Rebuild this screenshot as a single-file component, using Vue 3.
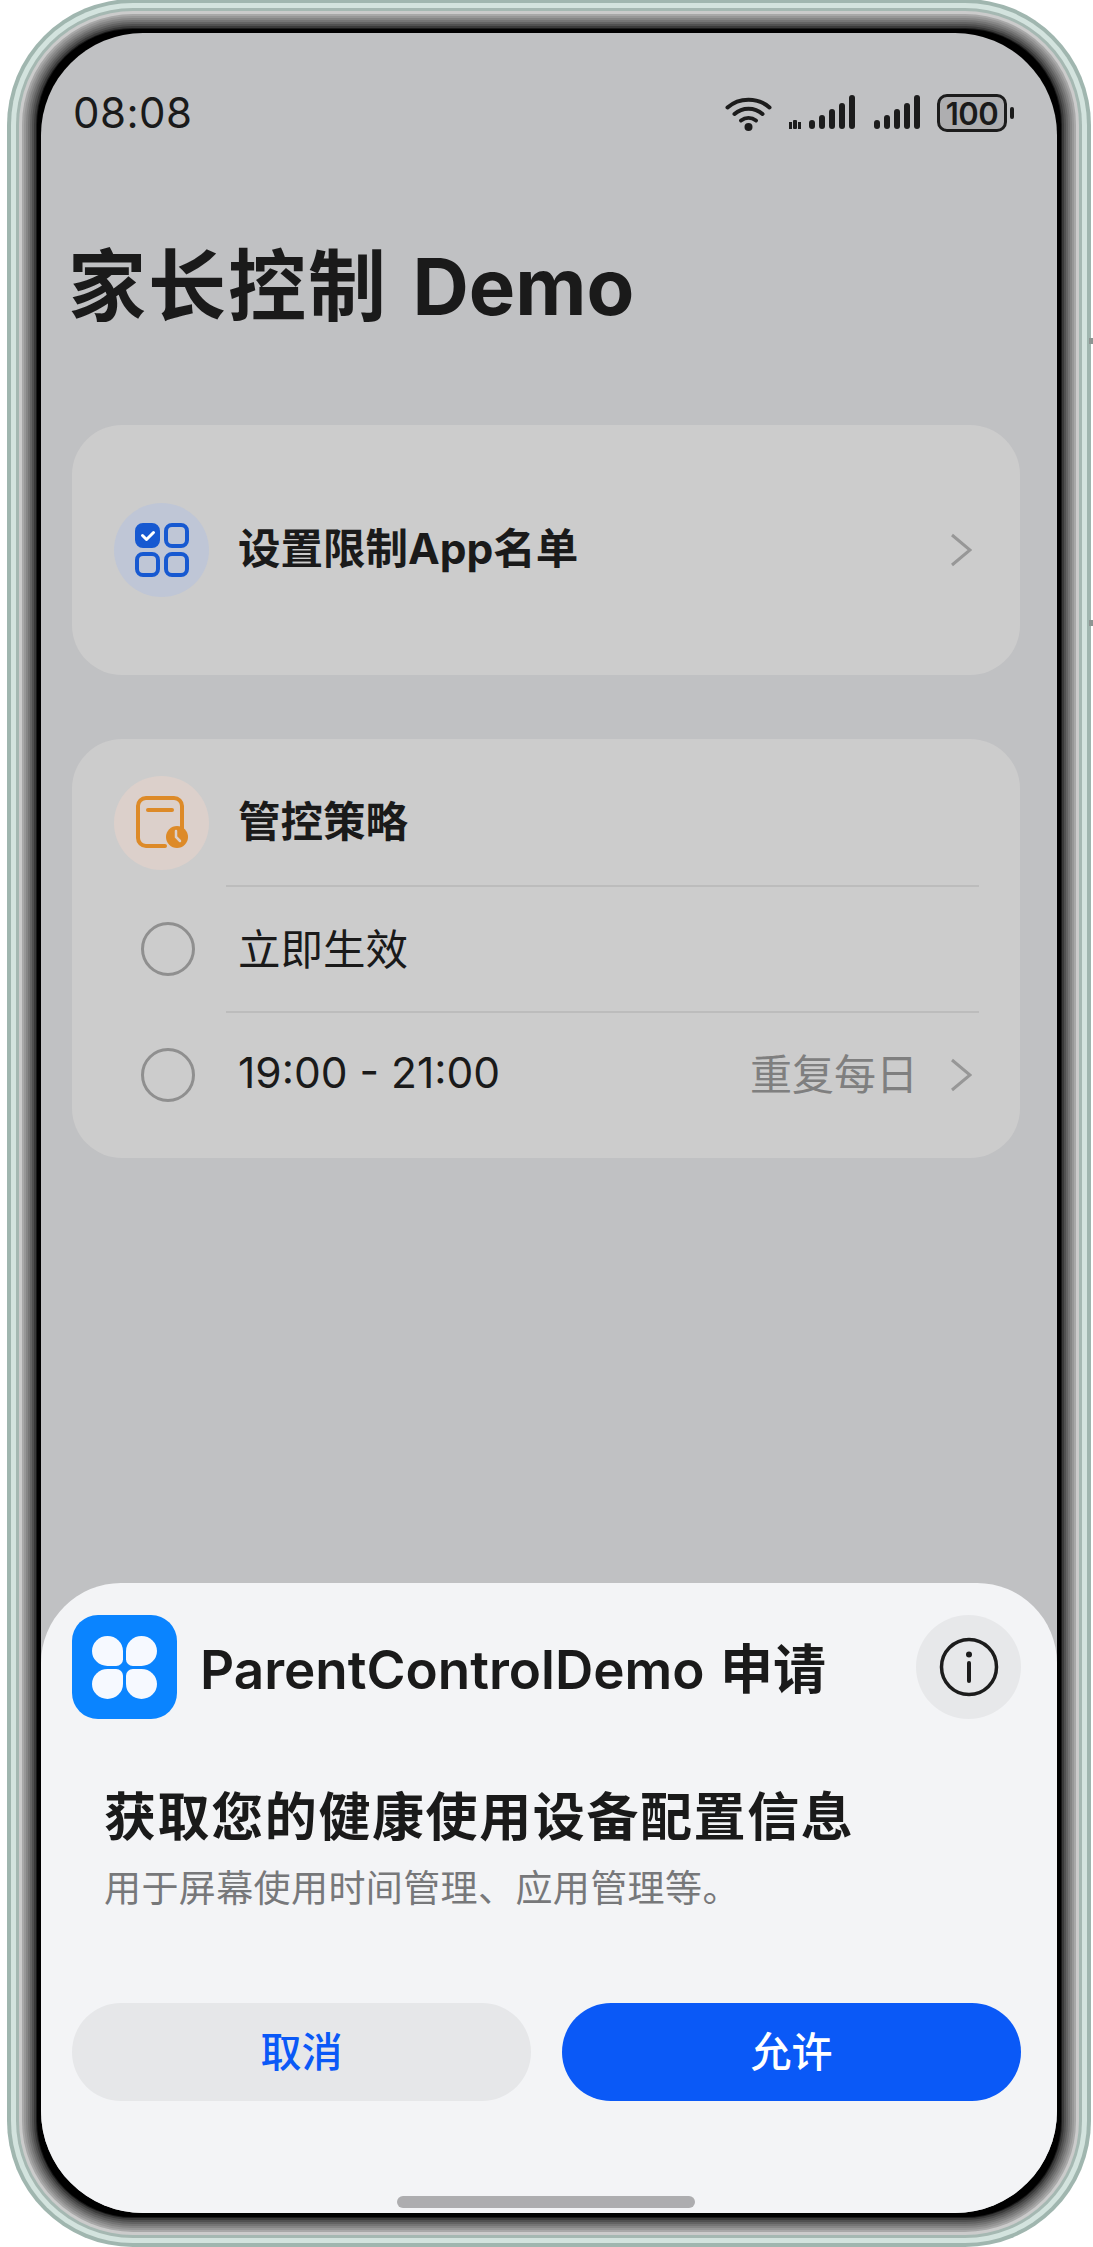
<script setup>
const options = [
  { id: "now", label: "立即生效" },
  { id: "range", label: "19:00 - 21:00", extra: "重复每日" },
];
</script>

<template>
  <div class="page">
    <i class="side-key"></i>
    <div class="bezel">
      <div class="screen">
        <div class="status">
          <span class="time">08:08</span>
          <div class="status-icons">
            <svg class="wifi" width="47" height="35" viewBox="0 0 47 35" fill="none" stroke="#1c1c1c" stroke-width="4" stroke-linecap="round">
              <path d="M2.5 11.5C14 1 33 1 44.5 11.5" />
              <path d="M9.5 18C17.5 11 29.5 11 37.5 18" />
              <path d="M16 24.5C20.5 21 26.5 21 31 24.5" />
              <circle cx="23.5" cy="31" r="4" fill="#1c1c1c" stroke="none" />
            </svg>
            <svg width="66" height="36" viewBox="0 0 66 36" fill="#1c1c1c">
              <rect x="0" y="27" width="3" height="7" />
              <rect x="4" y="25" width="4" height="9" rx="1" />
              <rect x="9" y="27" width="3" height="7" />
              <rect x="20" y="25" width="6" height="9" rx="3" />
              <rect x="30" y="20" width="6" height="14" rx="3" />
              <rect x="40" y="14" width="6" height="20" rx="3" />
              <rect x="50" y="8" width="6" height="26" rx="3" />
              <rect x="60" y="0" width="6" height="34" rx="3" />
            </svg>
            <svg width="46" height="36" viewBox="0 0 46 36" fill="#1c1c1c">
              <rect x="0" y="25" width="6" height="9" rx="3" />
              <rect x="10" y="20" width="6" height="14" rx="3" />
              <rect x="20" y="14" width="6" height="20" rx="3" />
              <rect x="30" y="8" width="6" height="26" rx="3" />
              <rect x="40" y="0" width="6" height="34" rx="3" />
            </svg>
            <div class="battery"><span>100</span></div>
            <i class="battery-nub"></i>
          </div>
        </div>

        <h1 class="title"><span class="title-cn">家长控制</span> Demo</h1>

        <section class="card card-single">
          <div class="round round-blue">
            <svg width="54" height="54" viewBox="0 0 54 54" fill="none" stroke="#1759d1" stroke-width="4">
              <rect x="2" y="2" width="21" height="21" rx="6" fill="#1759d1" />
              <rect x="31" y="2" width="21" height="21" rx="6" />
              <rect x="2" y="31" width="21" height="21" rx="6" />
              <rect x="31" y="31" width="21" height="21" rx="6" />
              <path d="M7.5 12.5l4 4 7-7" stroke="#fff" stroke-width="3" stroke-linecap="round" stroke-linejoin="round" />
            </svg>
          </div>
          <span class="card-label">设置限制App名单</span>
          <svg class="chevron" width="22" height="34" viewBox="0 0 22 34" fill="none" stroke="#979797" stroke-width="3">
            <path d="M2 2l18 15L2 32" />
          </svg>
        </section>

        <section class="card card-policy">
          <div class="policy-head">
            <div class="round round-orange">
              <svg width="54" height="54" viewBox="0 0 54 54" fill="none" stroke="#dd8a28" stroke-width="4" stroke-linecap="round">
                <path d="M30 50H11a8 8 0 0 1-8-8V10a8 8 0 0 1 8-8h28a8 8 0 0 1 8 8v24" />
                <path d="M13 14h24" />
                <circle cx="42" cy="41" r="11" fill="#dd8a28" stroke="none" />
                <path d="M41 35v6l4 4" stroke="#dcd0cb" stroke-width="2.5" />
              </svg>
            </div>
            <span class="card-label">管控策略</span>
          </div>
          <template v-for="opt in options" :key="opt.id">
            <div class="divider"></div>
            <div class="option">
              <i class="radio"></i>
              <span class="option-label">{{ opt.label }}</span>
              <template v-if="opt.extra">
                <span class="option-extra">{{ opt.extra }}</span>
                <svg class="chevron" width="22" height="34" viewBox="0 0 22 34" fill="none" stroke="#979797" stroke-width="3">
                  <path d="M2 2l18 15L2 32" />
                </svg>
              </template>
            </div>
          </template>
        </section>

        <div class="sheet">
          <div class="sheet-head">
            <div class="app-icon">
              <div class="petals">
                <i class="p1"></i><i class="p2"></i><i class="p3"></i><i class="p4"></i>
              </div>
            </div>
            <span class="app-title">ParentControlDemo 申请</span>
            <div class="info">
              <svg width="60" height="60" viewBox="0 0 60 60" fill="none" stroke="#1c1c1c" stroke-width="3.5">
                <circle cx="30" cy="30" r="27.5" />
                <circle cx="30" cy="17.5" r="3" fill="#1c1c1c" stroke="none" />
                <path d="M30 26v18" stroke-width="4" stroke-linecap="round" />
              </svg>
            </div>
          </div>
          <h2 class="ask">获取您的健康使用设备配置信息</h2>
          <p class="ask-sub">用于屏幕使用时间管理、应用管理等。</p>
          <div class="actions">
            <button class="btn btn-cancel">取消</button>
            <button class="btn btn-allow">允许</button>
          </div>
          <div class="home-bar"></div>
        </div>
      </div>
    </div>
  </div>
</template>

<style>
html,
body {
  background: #fff;
}
</style>

<style scoped>
.page {
  position: relative;
  box-sizing: border-box;
  width: 1093px;
  height: 2247px;
  padding: 33px 36px 34px 41px;
  font-family: Inter, "Noto Sans CJK SC", sans-serif;
  color: #1a1a1a;
}

/* rings stand in for the phone frame */
.bezel {
  height: 100%;
  background: #000;
  border-radius: 92px;
  box-shadow:
    0 0 0 4px #000,
    0 0 0 5px #1a1a1a,
    0 0 0 7px #3a3a3a,
    0 0 0 9px #505050,
    0 0 0 11px #636363,
    0 0 0 13px #757575,
    0 0 0 15px #868686,
    0 0 0 17px #979797,
    0 0 0 19px #a8a8a8,
    0 0 0 22px #cbcbcb,
    0 0 0 25px #a5b8b2,
    0 0 0 30px #d3e3de,
    0 0 0 34px #a0b6af;
}

/* volume key ends poking out of the right edge */
.side-key {
  position: absolute;
  top: 338px;
  right: 0;
  box-sizing: border-box;
  width: 4px;
  height: 288px;
  border-top: 6px solid #8d9693;
  border-bottom: 6px solid #8d9693;
}

.screen {
  position: relative;
  height: 100%;
  overflow: hidden;
  background: #c0c1c3;
  border-radius: 102px;
}

.status {
  display: flex;
  align-items: center;
  justify-content: space-between;
  height: 160px;
  padding: 0 43px 0 32px;
}

.time {
  font-size: 42px;
  line-height: 40px;
  letter-spacing: 0.5px;
}

.status-icons {
  display: flex;
  align-items: center;
}

.wifi {
  margin-right: 17px;
}

.status-icons svg + svg {
  margin-right: 17px;
}

.status-icons svg:nth-child(2) {
  margin-right: 19px;
}

.battery {
  box-sizing: border-box;
  display: flex;
  align-items: center;
  justify-content: center;
  width: 70px;
  height: 38px;
  border: 3.5px solid #1c1c1c;
  border-radius: 10px;
  background: #aeaeb0;
  font-size: 31px;
  font-weight: 600;
  letter-spacing: -0.5px;
}

.battery-nub {
  width: 4px;
  height: 12px;
  margin-left: 3px;
  border-radius: 2px;
  background: #1c1c1c;
}

.title {
  margin: 54px 0 98px 27px;
  font-size: 78px;
  line-height: 80px;
  font-weight: 700;
  word-spacing: 6px;
}

.title-cn {
  letter-spacing: 2px;
}

.card {
  width: 948px;
  margin-left: 31px;
  background: #cccccc;
  border-radius: 50px;
}

.card-single {
  box-sizing: border-box;
  display: flex;
  align-items: center;
  height: 250px;
  margin-bottom: 64px;
  padding: 0 48px 0 42px;
}

.round {
  display: flex;
  flex: none;
  align-items: center;
  justify-content: center;
  width: 95px;
  height: 94px;
  border-radius: 50%;
}

.round-blue {
  background: #bfc6d6;
}

.round-orange {
  background: #dcd0cb;
}

.card-label {
  flex: 1;
  margin-left: 29px;
  padding-bottom: 9px;
  font-size: 42.5px;
  font-weight: 700;
}

.chevron {
  flex: none;
}

.card-policy {
  height: 419px;
}

.policy-head {
  box-sizing: border-box;
  display: flex;
  align-items: center;
  height: 146px;
  padding: 21px 0 0 42px;
}

.divider {
  height: 2px;
  margin: 0 41px 0 154px;
  background: #bcbcbc;
}

.option {
  display: flex;
  align-items: center;
  height: 124px;
  padding: 0 48px 0 69px;
}

.radio {
  box-sizing: border-box;
  flex: none;
  width: 54px;
  height: 54px;
  border: 3px solid #8f8f8f;
  border-radius: 50%;
}

.option-label {
  flex: 1;
  margin-left: 43px;
  padding-bottom: 5px;
  font-size: 42.5px;
}

.option-extra {
  margin-right: 32px;
  padding-bottom: 8px;
  font-size: 42px;
  color: #7f7f7f;
}

.sheet {
  position: absolute;
  left: 0;
  right: 0;
  bottom: 0;
  box-sizing: border-box;
  height: 630px;
  padding: 32px 36px 0 31px;
  background: #f3f4f6;
  border-radius: 80px 80px 0 0;
}

.sheet-head {
  display: flex;
  align-items: center;
}

.app-icon {
  display: flex;
  flex: none;
  align-items: center;
  justify-content: center;
  width: 105px;
  height: 104px;
  background: #0a84ff;
  border-radius: 26px;
}

.petals {
  display: grid;
  grid-template-columns: 31px 31px;
  grid-auto-rows: 30px;
  gap: 3px;
}

.petals i {
  background: #f6f9ff;
}

.p1 {
  border-radius: 50% 50% 22% 50%;
}

.p2 {
  border-radius: 50% 50% 50% 22%;
}

.p3 {
  border-radius: 50% 22% 50% 50%;
}

.p4 {
  border-radius: 22% 50% 50% 50%;
}

.app-title {
  flex: 1;
  margin-left: 23px;
  padding-bottom: 3px;
  font-size: 53px;
  font-weight: 600;
  word-spacing: 2px;
}

.info {
  display: flex;
  flex: none;
  align-items: center;
  justify-content: center;
  width: 105px;
  height: 104px;
  background: #e7e8ea;
  border-radius: 50%;
}

.ask {
  margin: 66px 0 0 32px;
  font-size: 52px;
  line-height: 66px;
  font-weight: 700;
  letter-spacing: 1.6px;
}

.ask-sub {
  margin: 13px 0 0 32px;
  font-size: 37px;
  line-height: 50px;
  letter-spacing: 0.4px;
  color: #77787a;
}

.actions {
  display: flex;
  gap: 31px;
  margin-top: 89px;
}

.btn {
  flex: 1;
  height: 98px;
  padding: 0 0 6px;
  border: none;
  border-radius: 49px;
  font-family: inherit;
  font-size: 41px;
  font-weight: 500;
}

.btn-cancel {
  background: #e6e7e9;
  color: #0a59f7;
}

.btn-allow {
  background: #0a59f7;
  color: #fff;
}

.home-bar {
  position: absolute;
  left: 356px;
  bottom: 5px;
  width: 298px;
  height: 12px;
  background: #adadaf;
  border-radius: 6px;
}
</style>
